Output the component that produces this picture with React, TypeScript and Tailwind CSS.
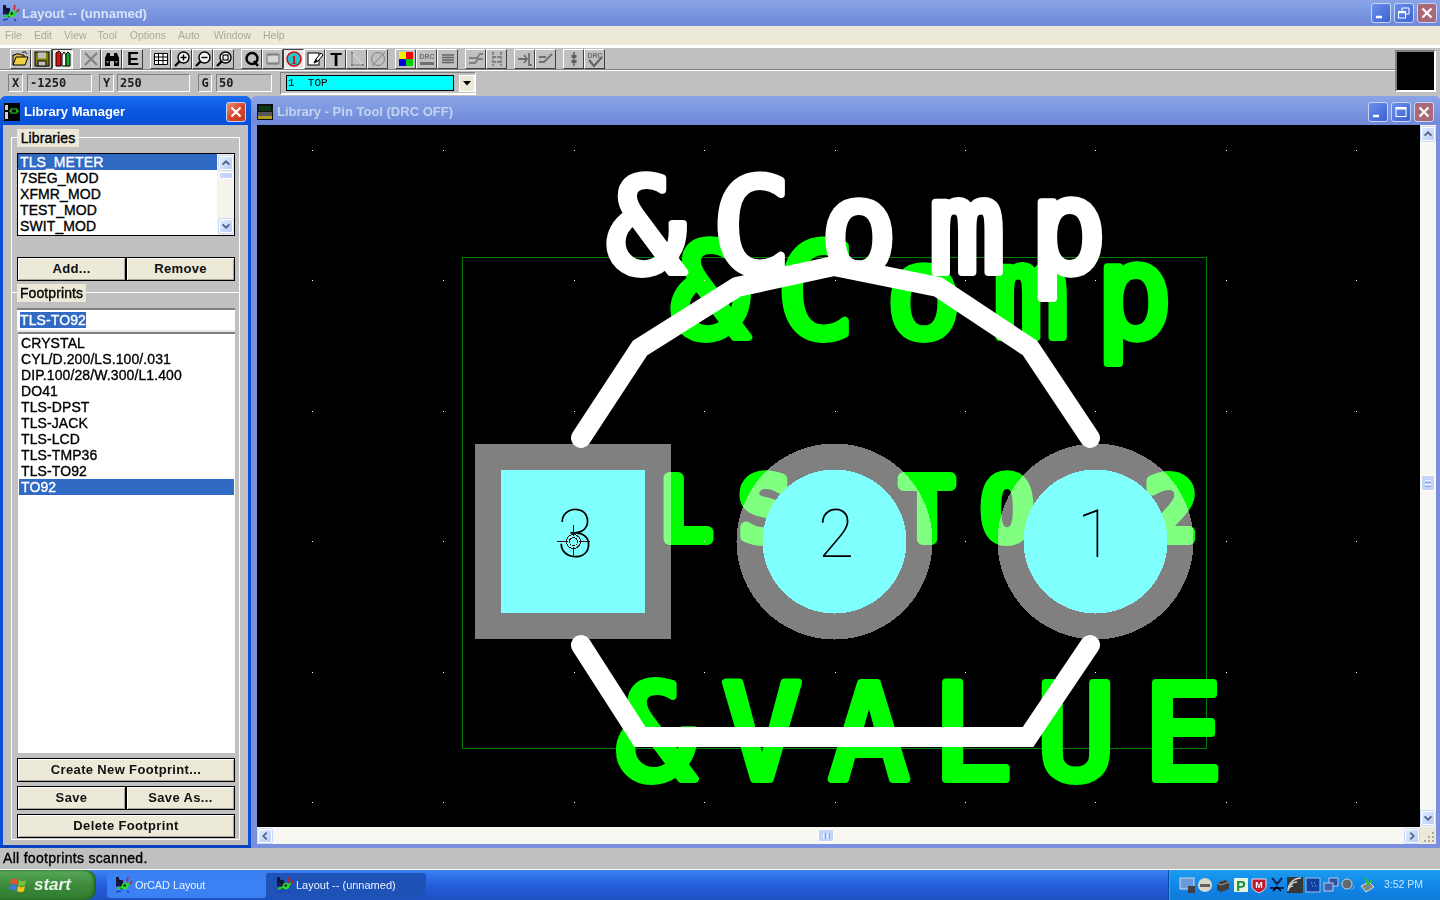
import React from 'react'

const ui = "font-['Liberation_Sans',sans-serif]"
const listText = "font-['Liberation_Sans',sans-serif] text-[14px] leading-[16px] tracking-[0.1px] text-black [-webkit-text-stroke:0.35px_black]"

const AppIcon = () => (
    <svg width="18" height="18" viewBox="0 0 18 18">
        <path d="M1 1h3v3h4v3h3v3h-3l-1 4-3-4-3 1z" fill="#1a1a4a" />
        <path d="M2 3l9 8" stroke="#101030" strokeWidth="2.5" />
        <path d="M2 13l5-2 3 1 5-5" stroke="#20d020" strokeWidth="2" fill="none" />
        <circle cx="10" cy="10" r="2.5" fill="none" stroke="#30e030" strokeWidth="1.5" />
        <path d="M13 1l-1 5M15 8l2-3" stroke="#d02020" strokeWidth="1.5" />
        <path d="M1 16l5-1M12 15l2 2" stroke="#2040d0" strokeWidth="1.5" />
    </svg>
)

const TitleBtn = ({ kind, active }: { kind: 'min' | 'max' | 'restore' | 'close'; active?: boolean }) => (
    <div
        className={`w-[20px] h-[20px] rounded-[3px] border border-[#c8d4f4] flex items-center justify-center ${
            kind === 'close'
                ? active
                    ? 'bg-gradient-to-br from-[#ea8a70] via-[#d8482a] to-[#c03818]'
                    : 'bg-[#a86878]'
                : 'bg-gradient-to-br from-[#6a90ec] to-[#3c62d0]'
        }`}
    >
        <svg width="14" height="14" viewBox="0 0 14 14" fill="none" stroke="white">
            {kind === 'min' && <path d="M2 11h6" strokeWidth="2.5" />}
            {kind === 'max' && (
                <>
                    <rect x="2" y="2.5" width="10" height="9" strokeWidth="1" />
                    <path d="M2 3.5h10" strokeWidth="2" />
                </>
            )}
            {kind === 'restore' && (
                <>
                    <rect x="1.5" y="5.5" width="7" height="6.5" />
                    <path d="M1.5 6.5h7" strokeWidth="1.5" />
                    <path d="M5 5V2h7v6h-3" />
                </>
            )}
            {kind === 'close' && <path d="M2.5 2.5l9 9M11.5 2.5l-9 9" strokeWidth="2.2" />}
        </svg>
    </div>
)

const Tool = ({ children, pressed }: { children?: React.ReactNode; pressed?: boolean }) => (
    <div
        className={`w-[21px] h-[20px] flex items-center justify-center border ${
            pressed
                ? 'bg-[#e8e8e8] border-t-[#404040] border-l-[#404040] border-r-white border-b-white'
                : 'bg-[#c0c0c0] border-t-white border-l-white border-r-[#404040] border-b-[#404040]'
        }`}
    >
        <svg width="18" height="18" viewBox="0 0 18 18" fill="none">
            {children}
        </svg>
    </div>
)

const Magnifier = ({ children }: { children?: React.ReactNode }) => (
    <>
        <circle cx="10.5" cy="7.5" r="5.5" stroke="black" strokeWidth="1.4" fill="#f4f4f4" />
        <path d="M6.5 11.5L2 16" stroke="black" strokeWidth="2.4" />
        {children}
    </>
)

const Toolbar = () => (
    <div className="flex h-[22px] items-start pt-[1px] pl-[10px] gap-[7px]">
        <div className="flex">
            <Tool>
                <path d="M1 15V5h2l1-1h4l1 1h3v2" stroke="black" fill="#e0c050" />
                <path d="M1 15l3-8h12l-3 8z" fill="#f0d040" stroke="black" />
                <path d="M10 3c2-2 4-1 5 1" stroke="black" />
            </Tool>
            <Tool>
                <rect x="2" y="2" width="14" height="14" fill="#808000" stroke="black" />
                <rect x="5" y="2.5" width="8" height="6" fill="#c0c0c0" />
                <rect x="5" y="11" width="8" height="5" fill="#c0c0c0" stroke="black" />
            </Tool>
            <Tool pressed>
                <path d="M2 16V3l3-2 2 2v13z" fill="#e01010" stroke="black" />
                <path d="M8 16V5l2-3 2 3v11z" fill="#f8f8f8" stroke="black" />
                <path d="M12 16V4l2-2 2 2v12z" fill="#10b030" stroke="black" />
            </Tool>
        </div>
        <div className="flex">
            <Tool>
                <path d="M3 3l12 12M15 3L3 15" stroke="#808080" strokeWidth="2" />
            </Tool>
            <Tool>
                <path d="M2 16V8l2-5h3v13zM16 16V8l-2-5h-3v13z" fill="black" />
                <path d="M7 6h4v5H7z" fill="black" />
                <path d="M3.5 12h2M12.5 12h2" stroke="white" />
            </Tool>
            <Tool>
                <text x="9" y="15" textAnchor="middle" fontFamily="Liberation Sans" fontWeight="700" fontSize="18" fill="black">E</text>
            </Tool>
        </div>
        <div className="flex">
            <Tool>
                <path d="M2.5 3.500h13v11h-13zM2.500 7h13M2.500 10.500h13M6.500 3.500v11M11 3.500v11" stroke="black" fill="white" />
            </Tool>
            <Tool>
                <Magnifier>
                    <path d="M7.500 7.500h6M10.500 4.500v6" stroke="black" strokeWidth="1.4" />
                </Magnifier>
            </Tool>
            <Tool>
                <Magnifier>
                    <path d="M7.500 7.500h6" stroke="black" strokeWidth="1.4" />
                </Magnifier>
            </Tool>
            <Tool>
                <Magnifier>
                    <rect x="8" y="5" width="5" height="5" stroke="black" strokeWidth="1.2" />
                </Magnifier>
            </Tool>
        </div>
        <div className="flex">
            <Tool>
                <circle cx="9" cy="8.500" r="5.500" stroke="black" strokeWidth="2.4" />
                <path d="M11 11l4 5" stroke="black" strokeWidth="2.4" />
            </Tool>
            <Tool>
                <rect x="3" y="5" width="12" height="8" stroke="#707070" fill="#d8d8d8" />
                <path d="M4 3v2M6 3v2M8 3v2M10 3v2M12 3v2M14 3v2M4 13v2M6 13v2M8 13v2M10 13v2M12 13v2M14 13v2" stroke="#707070" />
            </Tool>
            <Tool pressed>
                <circle cx="9" cy="9" r="7" fill="#20c8d0" stroke="#d01010" strokeWidth="1.6" />
                <text x="9" y="13.500" textAnchor="middle" fontFamily="Liberation Serif" fontWeight="700" fontSize="12" fill="#c01010">1</text>
            </Tool>
            <Tool>
                <rect x="2" y="3" width="11" height="12" fill="white" stroke="black" />
                <path d="M8 13l2-4 5-6 2 2-5 6z" fill="white" stroke="black" />
                <path d="M8 13l2-4 2 2z" fill="black" />
            </Tool>
            <Tool>
                <text x="9" y="15.500" textAnchor="middle" fontFamily="Liberation Sans" fontWeight="700" fontSize="19" fill="black">T</text>
            </Tool>
            <Tool>
                <path d="M4 3v12h11z" stroke="#808080" />
                <path d="M4 3l11 12" stroke="white" strokeWidth="1" />
                <rect x="3" y="2" width="2" height="2" fill="#808080" />
                <rect x="3" y="14" width="2" height="2" fill="#808080" />
                <rect x="14" y="14" width="2" height="2" fill="#808080" />
            </Tool>
            <Tool>
                <circle cx="9" cy="9" r="6.500" stroke="#808080" />
                <path d="M3 16L16 2" stroke="#808080" />
            </Tool>
        </div>
        <div className="flex">
            <Tool>
                <rect x="2" y="2" width="7" height="7" fill="#f0f000" />
                <rect x="9" y="2" width="7" height="7" fill="#f00000" />
                <rect x="2" y="9" width="7" height="7" fill="#0000e0" />
                <rect x="9" y="9" width="7" height="7" fill="#00d000" />
            </Tool>
            <Tool>
                <text x="9" y="9" textAnchor="middle" fontFamily="Liberation Sans" fontWeight="700" fontSize="7" fill="#707070">DRC</text>
                <rect x="2" y="12" width="14" height="3" fill="#707070" />
            </Tool>
            <Tool>
                <path d="M3 5h12M3 7.500h12M3 10h12M3 12.500h12" stroke="#606060" strokeWidth="1.6" />
                <path d="M9 4v10" stroke="#808080" />
            </Tool>
        </div>
        <div className="flex">
            <Tool>
                <path d="M2 8h8l3-4h3M2 13h6l3-4h5" stroke="#808080" strokeWidth="2" />
            </Tool>
            <Tool>
                <path d="M5 2v14M13 2v14M5 7h8M5 12h8" stroke="#808080" strokeWidth="1.8" strokeDasharray="3 1" />
            </Tool>
        </div>
        <div className="flex">
            <Tool>
                <path d="M2 9h9M8 5l3 4-3 4M13 3v12h3" stroke="#707070" strokeWidth="1.8" />
            </Tool>
            <Tool>
                <path d="M2 7h7M2 12h5l8-8" stroke="#707070" strokeWidth="1.8" />
            </Tool>
        </div>
        <div className="flex">
            <Tool>
                <path d="M9 2v14" stroke="#606060" strokeWidth="1.5" />
                <rect x="6.500" y="5" width="5" height="3" fill="#606060" />
                <rect x="6.500" y="10" width="5" height="3" fill="#606060" />
            </Tool>
            <Tool>
                <text x="9" y="7.500" textAnchor="middle" fontFamily="Liberation Sans" fontWeight="700" fontSize="7" fill="#707070">DRC</text>
                <path d="M3 10l5 6 8-9" stroke="#606060" strokeWidth="2" />
            </Tool>
        </div>
    </div>
)

const Sunken = ({ className, children }: { className: string; children?: React.ReactNode }) => (
    <div
        className={`h-[18px] flex items-center border border-t-[#808080] border-l-[#808080] border-r-white border-b-white font-['DejaVu_Sans_Mono',monospace] font-bold text-[12px] text-[#202020] ${className}`}
    >
        {children}
    </div>
)

const Legend = ({ children, className }: { children: React.ReactNode; className: string }) => (
    <div className={`absolute bg-[#ece9d8] h-[18px] flex items-center justify-center ${listText} ${className}`}>{children}</div>
)

const XpBtn = ({ children, className }: { children: React.ReactNode; className: string }) => (
    <div
        className={`h-[24px] bg-[#ece9d8] border border-black shadow-[inset_1px_1px_0_white,inset_-1px_-1px_0_#aca899] flex items-center justify-center font-['Liberation_Sans',sans-serif] text-[13px] font-bold tracking-[0.35px] text-[#101010] ${className}`}
    >
        {children}
    </div>
)

const ScrollArrow = ({ dir, size = 14 }: { dir: 'up' | 'down' | 'left' | 'right'; size?: number }) => {
    const d = {
        up: 'M3 9l4-4 4 4',
        down: 'M3 5l4 4 4-4',
        left: 'M9 3L5 7l4 4',
        right: 'M5 3l4 4-4 4'
    }[dir]
    return (
        <div
            style={{ width: size, height: size }}
            className="shrink-0 rounded-[2px] bg-gradient-to-br from-[#e2ecfe] to-[#b8ccf6] border border-white flex items-center justify-center shadow-[0_0_0_1px_#c8d8f8]"
        >
            <svg width="14" height="14" viewBox="0 0 14 14" fill="none">
                <path d={d} stroke="#4d6185" strokeWidth="2" />
            </svg>
        </div>
    )
}

const Canvas = () => {
    const xs = [312, 443, 574, 704, 835, 965, 1095, 1226, 1356]
    const ys = [150, 280, 411, 541, 672, 802]
    const big = { fontFamily: 'DejaVu Sans Mono', strokeWidth: 8, strokeLinejoin: 'round' as const, textAnchor: 'middle' as const }
    return (
        <svg className="block w-[1163px] h-[702px] bg-black" viewBox="257 125 1163 702" shapeRendering="crispEdges">
            {xs.map((x) => ys.map((y) => <rect key={`${x}-${y}`} x={x} y={y} width="1" height="1" fill="white" />))}
            <rect x="462.5" y="257.5" width="744" height="491" fill="none" stroke="#008000" />

            <rect x="475" y="444" width="196" height="195" fill="#808080" />
            <rect x="501" y="470" width="144" height="143" fill="#80ffff" />
            <circle cx="834.5" cy="541.5" r="98" fill="#808080" />
            <circle cx="834.5" cy="541.5" r="72" fill="#80ffff" />
            <circle cx="1095.5" cy="541.5" r="98" fill="#808080" />
            <circle cx="1095.5" cy="541.5" r="72" fill="#80ffff" />

            <g className="mix-blend-lighten" shapeRendering="auto">
                <text
                    fontFamily="DejaVu Sans Mono"
                    fontSize="84"
                    fill="#00ff00"
                    stroke="#00ff00"
                    strokeWidth="12"
                    strokeLinejoin="round"
                    textAnchor="middle"
                    x="606 686 765 846 927 1007 1090 1171"
                    y="539"
                >
                    TLS-TO92
                </text>
                <text {...big} fontSize="130" fill="#00ff00" stroke="#00ff00" x="710 816" y="337">
                    &amp;C
                    <tspan fontSize="126" x="924 1031 1134" y="337">omp</tspan>
                </text>
                <text {...big} fontSize="132" fill="#00ff00" stroke="#00ff00" x="656 762 869 972 1076 1183" y="779">
                    &amp;VALUE
                </text>
            </g>

            <g shapeRendering="auto">
                <text {...big} fontSize="130" fill="white" stroke="white" x="646 752" y="272">
                    &amp;C
                    <tspan fontSize="126" x="859 967 1068" y="272">omp</tspan>
                </text>
                <path
                    d="M581 438L640 348L737 287L834 266L938 287L1030 348L1090 438"
                    fill="none"
                    stroke="white"
                    strokeWidth="20"
                    strokeLinecap="round"
                    strokeLinejoin="miter"
                />
                <path
                    d="M581 645L640 737H1028L1090 645"
                    fill="none"
                    stroke="white"
                    strokeWidth="20"
                    strokeLinecap="round"
                    strokeLinejoin="miter"
                />
                <text fontFamily="Roboto" fontWeight="100" fontSize="66" fill="black" textAnchor="middle" x="836" y="557">2</text>
                <text fontFamily="Roboto" fontWeight="100" fontSize="66" fill="black" textAnchor="middle" x="1095" y="557">1</text>
                <text fontFamily="Roboto" fontWeight="100" fontSize="66" fill="black" textAnchor="middle" x="575" y="557">3</text>
            </g>
            <circle cx="573.5" cy="541.5" r="7" fill="none" stroke="#301010" />
            <circle cx="573.5" cy="541.5" r="4" fill="none" stroke="#301010" />
            <path d="M557 541.5h11M579 541.5h11M573.5 525v11M573.5 547v10" stroke="#301010" fill="none" />
        </svg>
    )
}

const TrayIcon = ({ children }: { children: React.ReactNode }) => (
    <svg width="16" height="16" viewBox="0 0 16 16" fill="none">
        {children}
    </svg>
)

export default function App() {
    return (
        <div className={`w-[1440px] h-[900px] overflow-hidden flex flex-col bg-[#c0c0c0] ${ui}`}>
            {/* main title bar */}
            <div className="h-[26px] flex items-center pl-[2px] bg-gradient-to-b from-[#8aa4e6] via-[#7b97e0] to-[#7088d8]">
                <AppIcon />
                <span className="ml-[2px] pt-[1px] text-[13px] font-bold text-[#d8e2f6]">Layout -- (unnamed)</span>
                <div className="ml-auto flex gap-[3px] pr-[3px]">
                    <TitleBtn kind="min" />
                    <TitleBtn kind="restore" />
                    <TitleBtn kind="close" />
                </div>
            </div>

            {/* menu */}
            <div className="h-[19px] bg-[#ece9d8] flex items-center font-['Liberation_Sans',sans-serif] text-[10.5px] text-[#aca899]">
                <span className="ml-[5px]">File</span>
                <span className="ml-[12px]">Edit</span>
                <span className="ml-[12px]">View</span>
                <span className="ml-[11px]">Tool</span>
                <span className="ml-[13px]">Options</span>
                <span className="ml-[12px]">Auto</span>
                <span className="ml-[14px]">Window</span>
                <span className="ml-[12px]">Help</span>
            </div>

            {/* toolbars */}
            <div className="h-[51px] border-t-[3px] border-white bg-[#c0c0c0] flex relative">
                <div className="flex-1 flex flex-col">
                    <Toolbar />
                    <div className="h-[2px] mt-[-1px] bg-gradient-to-b from-[#808080] from-50% to-white to-50%" />
                    <div className="flex items-center pl-[8px] h-[24px]">
                        <Sunken className="w-[15px] justify-center">X</Sunken>
                        <Sunken className="w-[65px] ml-[4px] pl-[2px]">-1250</Sunken>
                        <Sunken className="w-[15px] ml-[7px] justify-center">Y</Sunken>
                        <Sunken className="w-[73px] ml-[3px] pl-[2px]">250</Sunken>
                        <Sunken className="w-[14px] ml-[8px] justify-center">G</Sunken>
                        <Sunken className="w-[56px] ml-[4px] pl-[2px]">50</Sunken>
                        <div className="ml-[8px] w-[196px] h-[23px] flex items-center border border-t-[#808080] border-l-[#808080] border-r-white border-b-white bg-[#c0c0c0] shadow-[inset_0_-1px_0_white]">
                            <div className="ml-[5px] w-[168px] h-[16px] bg-[#00ffff] border border-black flex items-center pl-[1px] font-['Liberation_Mono',monospace] text-[11px] text-black whitespace-pre">
                                {'1  TOP'}
                            </div>
                            <div className="ml-[5px] w-[16px] h-[17px] bg-[#ece9d8] border border-white flex items-center justify-center">
                                <svg width="8" height="5" viewBox="0 0 8 5">
                                    <path d="M0 0h8L4 4.5z" fill="black" />
                                </svg>
                            </div>
                        </div>
                    </div>
                </div>
                <div className="w-[41px] h-[42px] mt-[2px] mr-[4px] bg-black border-2 border-t-[#808080] border-l-[#808080] border-r-white border-b-white" />
            </div>

            {/* workspace */}
            <div className="h-[752px] flex">
                {/* library manager */}
                <div className="w-[251px] h-full flex flex-col rounded-t-[6px] overflow-hidden bg-[#0a50d8]">
                    <div className="h-[29px] shrink-0 flex items-center pt-[3px] pl-[4px] pr-[5px] bg-gradient-to-b from-[#1a6cf0] via-[#0a58e0] to-[#0850d8]">
                        <div className="w-[16px] h-[18px] bg-black flex items-center justify-center">
                            <svg width="16" height="18" viewBox="0 0 16 18" fill="none">
                                <path d="M1 2h3v5H1zM1 9h3v7H1z" fill="#d0d0d0" />
                                <path d="M5 8h3M12 8h3" stroke="#20e020" />
                                <rect x="7" y="6" width="6" height="4" stroke="#20e020" />
                            </svg>
                        </div>
                        <span className="ml-[4px] text-[13px] font-bold text-white">Library Manager</span>
                        <div className="ml-auto">
                            <TitleBtn kind="close" active />
                        </div>
                    </div>
                    <div className="mx-[3px] flex-1 bg-[#c0c0c0] px-[8px] relative min-h-0 pt-[12px]">
                        {/* Libraries */}
                        <div className="relative h-[155px] border-t border-l border-r border-white px-[6px]">
                            <Legend className="left-[5px] top-[-9px] w-[62px]">Libraries</Legend>
                            <div className="absolute left-[5px] top-[15px] w-[218px] h-[83px] bg-white border border-black flex">
                                <div className={`flex-1 ${listText}`}>
                                    <div className="bg-[#316ac5] text-white [-webkit-text-stroke:0.35px_white] pl-[2px]">TLS_METER</div>
                                    <div className="pl-[2px]">7SEG_MOD</div>
                                    <div className="pl-[2px]">XFMR_MOD</div>
                                    <div className="pl-[2px]">TEST_MOD</div>
                                    <div className="pl-[2px]">SWIT_MOD</div>
                                </div>
                                <div className="w-[17px] bg-[#f4f3ee] flex flex-col items-center py-[2px]">
                                    <ScrollArrow dir="up" />
                                    <div className="w-[14px] h-[7px] mt-[2px] rounded-[2px] bg-[#c4d4f8] border border-white" />
                                    <div className="flex-1" />
                                    <ScrollArrow dir="down" />
                                </div>
                            </div>
                            <div className="absolute left-[5px] top-[119px] w-[218px] flex">
                                <XpBtn className="w-[109px]">Add...</XpBtn>
                                <XpBtn className="w-[109px]">Remove</XpBtn>
                            </div>
                        </div>

                        {/* Footprints */}
                        <div className="relative h-[548px] border border-white px-[6px]">
                            <Legend className="left-[5px] top-[-9px] w-[69px]">Footprints</Legend>
                            <div className="absolute left-[5px] top-[15px] w-[218px] h-[24px] bg-white border-t-2 border-t-[#808080] border-b-2 border-b-[#e8e8e0] flex items-center pl-[3px]">
                                <span className={`bg-[#316ac5] ${listText} !text-white [-webkit-text-stroke:0.35px_white]`}>TLS-TO92</span>
                            </div>
                            <div className={`absolute left-[6px] top-[39px] w-[217px] h-[421px] bg-white border-t-2 border-t-[#808080] pl-[1px] pr-[1px] pt-[1px] ${listText}`}>
                                <div className="pl-[2px]">CRYSTAL</div>
                                <div className="pl-[2px]">CYL/D.200/LS.100/.031</div>
                                <div className="pl-[2px]">DIP.100/28/W.300/L1.400</div>
                                <div className="pl-[2px]">DO41</div>
                                <div className="pl-[2px]">TLS-DPST</div>
                                <div className="pl-[2px]">TLS-JACK</div>
                                <div className="pl-[2px]">TLS-LCD</div>
                                <div className="pl-[2px]">TLS-TMP36</div>
                                <div className="pl-[2px]">TLS-TO92</div>
                                <div className="pl-[2px] bg-[#316ac5] text-white [-webkit-text-stroke:0.35px_white]">TO92</div>
                            </div>
                            <div className="absolute left-[5px] top-[465px] w-[218px] flex flex-col gap-[4px]">
                                <XpBtn className="w-[218px]">Create New Footprint...</XpBtn>
                                <div className="flex">
                                    <XpBtn className="w-[109px]">Save</XpBtn>
                                    <XpBtn className="w-[109px]">Save As...</XpBtn>
                                </div>
                                <XpBtn className="w-[218px]">Delete Footprint</XpBtn>
                            </div>
                        </div>
                    </div>
                    <div className="h-[3px] shrink-0 bg-[#0840c0]" />
                </div>

                {/* pin tool window */}
                <div className="flex-1 h-full flex flex-col rounded-t-[6px] overflow-hidden bg-[#7b8fdf] pl-[6px] pr-[4px] pb-[4px]">
                    <div className="h-[29px] shrink-0 flex items-center pt-[3px] -ml-[5px] -mr-[4px] pl-[5px] pr-[6px] bg-gradient-to-b from-[#8aa4e6] via-[#7b97e0] to-[#7088d8]">
                        <svg width="16" height="16" viewBox="0 0 16 16">
                            <rect width="16" height="16" fill="#101010" />
                            <rect x="2" y="2" width="12" height="5" fill="#103810" />
                            <path d="M1 9h14M1 11h14" stroke="#a0a0a0" />
                            <rect x="1" y="12" width="14" height="3" fill="#b0a020" />
                        </svg>
                        <span className="ml-[4px] text-[13px] font-bold text-[#c4d2f2]">Library - Pin Tool (DRC OFF)</span>
                        <div className="ml-auto flex gap-[3px]">
                            <TitleBtn kind="min" />
                            <TitleBtn kind="max" />
                            <TitleBtn kind="close" />
                        </div>
                    </div>
                    <div className="flex flex-col flex-1 min-h-0">
                        <div className="flex h-[702px]">
                            <Canvas />
                            <div className="w-[16px] bg-[#f8f7f1] flex flex-col items-center py-[2px]">
                                <ScrollArrow dir="up" />
                                <div className="flex-1 flex items-start pt-[334px]">
                                    <div className="w-[14px] h-[16px] rounded-[2px] bg-[#c4d4f8] border border-white flex flex-col items-center justify-center gap-[1px]">
                                        <div className="w-[6px] h-[1px] bg-[#eef3fe]" />
                                        <div className="w-[6px] h-[1px] bg-[#8ca8e4]" />
                                        <div className="w-[6px] h-[1px] bg-[#eef3fe]" />
                                        <div className="w-[6px] h-[1px] bg-[#8ca8e4]" />
                                    </div>
                                </div>
                                <ScrollArrow dir="down" />
                            </div>
                        </div>
                        <div className="flex h-[17px] bg-[#f8f7f1]">
                            <div className="w-[1163px] flex items-center px-[1px]">
                                <ScrollArrow dir="left" />
                                <div className="flex-1 flex pl-[546px]">
                                    <div className="w-[16px] h-[13px] rounded-[2px] bg-[#c4d4f8] border border-white flex items-center justify-center gap-[1px]">
                                        <div className="w-[1px] h-[6px] bg-[#eef3fe]" />
                                        <div className="w-[1px] h-[6px] bg-[#8ca8e4]" />
                                        <div className="w-[1px] h-[6px] bg-[#eef3fe]" />
                                        <div className="w-[1px] h-[6px] bg-[#8ca8e4]" />
                                    </div>
                                </div>
                                <ScrollArrow dir="right" />
                            </div>
                            <div className="w-[16px] bg-[#ece9d8] flex items-end justify-end p-[2px]">
                                <svg width="10" height="10" viewBox="0 0 10 10" fill="#aca899">
                                    <path d="M8 0h2v2H8zM4 4h2v2H4zM8 4h2v2H8zM0 8h2v2H0zM4 8h2v2H4zM8 8h2v2H8z" />
                                </svg>
                            </div>
                        </div>
                    </div>
                </div>
            </div>

            {/* status */}
            <div className="h-[22px] shrink-0 flex items-center pl-[3px] border-b border-white font-['Liberation_Sans',sans-serif] text-[14px] tracking-[0.3px] text-black [-webkit-text-stroke:0.35px_black]">
                All footprints scanned.
            </div>

            {/* taskbar */}
            <div className="h-[30px] shrink-0 flex items-center bg-gradient-to-b from-[#3c81f3] via-[#245edb] to-[#1e50c0] font-['Liberation_Sans',sans-serif] text-[11px] text-[#e8f0ff]">
                <div className="w-[96px] h-full rounded-r-[10px] bg-gradient-to-b from-[#5aa85a] via-[#3c8c3c] to-[#2f7a2f] flex items-center pl-[10px] shadow-[inset_-2px_0_3px_#1c5c1c]">
                    <svg width="18" height="18" viewBox="0 0 18 18">
                        <path d="M1 4c2-2 5-2 7 0l-1 5c-2-2-5-2-7 0z" fill="#e8552a" />
                        <path d="M9 4c2 1.500 5 1.500 7 0l-1 5c-2 1.500-5 1.500-7 0z" fill="#7ac143" />
                        <path d="M0 10c2-2 5-2 7 0l-1 5c-2-2-5-2-7 0z" fill="#3a7be0" />
                        <path d="M8 10c2 1.500 5 1.500 7 0l-1 5c-2 1.500-5 1.500-7 0z" fill="#f5c518" />
                    </svg>
                    <span className="ml-[6px] text-[17px] font-bold italic text-[#e8f4e8]">start</span>
                </div>
                <div className="ml-[11px] w-[159px] h-[25px] rounded-[3px] bg-[#3c81f3] flex items-center pl-[8px]">
                    <AppIcon />
                    <span className="ml-[2px] tracking-[-0.1px]">OrCAD Layout</span>
                </div>
                <div className="w-[160px] h-[25px] rounded-[3px] bg-[#1e52b7] flex items-center pl-[10px]">
                    <AppIcon />
                    <span className="ml-[2px]">Layout -- (unnamed)</span>
                </div>
                <div className="ml-auto w-[272px] h-full flex items-center pl-[10px] bg-gradient-to-b from-[#1c9cf0] via-[#1088e8] to-[#0f78d8] border-l border-[#0c4ca8] shadow-[inset_1px_0_1px_#18b0f8]">
                    <div className="flex gap-[2px]">
                        <TrayIcon>
                            <rect x="1" y="1" width="14" height="11" fill="#6a98d8" stroke="#c8d8f0" />
                            <rect x="9" y="9" width="7" height="7" fill="#404040" />
                        </TrayIcon>
                        <TrayIcon>
                            <circle cx="8" cy="8" r="7" fill="#d8d8c8" />
                            <path d="M3 7h10v3H3z" fill="#606060" />
                        </TrayIcon>
                        <TrayIcon>
                            <path d="M2 6l8-3 4 2v7l-8 3-4-2z" fill="#404040" />
                            <path d="M2 6l4 2 8-3" stroke="#a0a0a0" />
                        </TrayIcon>
                        <TrayIcon>
                            <rect x="1" y="1" width="14" height="14" rx="1" fill="#e8f0e0" />
                            <text x="8" y="14" textAnchor="middle" fontFamily="Liberation Sans" fontWeight="700" fontSize="14" fill="#109030">P</text>
                        </TrayIcon>
                        <TrayIcon>
                            <path d="M1 2h14v7c0 3-3 5-7 7-4-2-7-4-7-7z" fill="#c01830" stroke="#e8e8e8" />
                            <text x="8" y="11" textAnchor="middle" fontFamily="Liberation Sans" fontWeight="700" fontSize="9" fill="white">M</text>
                        </TrayIcon>
                        <TrayIcon>
                            <path d="M3 1l5 6 5-6M1 11h14" stroke="#102060" strokeWidth="2" />
                            <path d="M4 14l4-4 4 4" stroke="black" strokeWidth="1.500" />
                        </TrayIcon>
                        <TrayIcon>
                            <rect width="16" height="16" fill="#383838" />
                            <path d="M1 14a13 13 0 0 1 13-13M1 14a9 9 0 0 1 9-9M1 14a5 5 0 0 1 5-5" stroke="#d0d0d0" strokeWidth="1.400" />
                        </TrayIcon>
                        <TrayIcon>
                            <rect x="1" y="1" width="14" height="14" fill="#1040a0" stroke="#a0c0e8" />
                            <path d="M6 6h1M9 6h1M7 9h1M10 9h1" stroke="#a0c0e8" />
                        </TrayIcon>
                        <TrayIcon>
                            <rect x="6" y="1" width="9" height="8" fill="#3050a0" stroke="#c0c8e8" />
                            <rect x="1" y="6" width="9" height="8" fill="#4060b0" stroke="#c0c8e8" />
                        </TrayIcon>
                        <TrayIcon>
                            <circle cx="6" cy="7" r="5" fill="#606870" stroke="#d0d0d0" />
                            <path d="M10 13l4-4" stroke="#80a0e0" />
                        </TrayIcon>
                        <TrayIcon>
                            <path d="M2 9l8-4 5 5-8 5z" fill="#808880" stroke="#e0e0e0" />
                            <path d="M6 1l3 6 4-4" stroke="#30c030" strokeWidth="2" />
                        </TrayIcon>
                    </div>
                    <span className="ml-[9px] text-[10.5px] text-[#c8e4fc]">3:52 PM</span>
                </div>
            </div>
        </div>
    )
}
